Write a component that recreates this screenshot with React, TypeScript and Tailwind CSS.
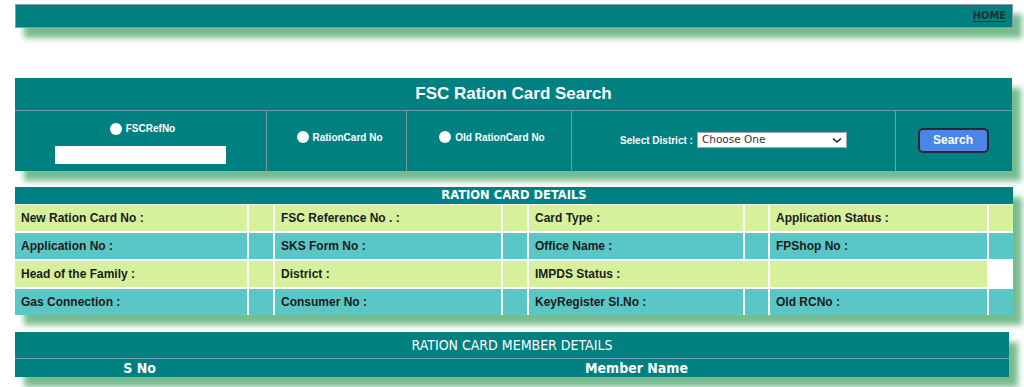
import React from 'react';

const shadow = 'shadow-[9px_10px_6px_#76bc8e]';

const Radio = ({ label }: { label: string }) => (
  <label className="flex items-center gap-[4px] text-[10px] font-bold text-white">
    <span className="inline-block h-[12px] w-[12px] rounded-full bg-white" />
    {label}
  </label>
);

type Cell = { text?: string; bg?: string; span?: string };

const rows: Cell[][] = [
  [
    { text: 'New Ration Card No :' }, {}, { text: 'FSC Reference No . :' }, {},
    { text: 'Card Type :' }, {}, { text: 'Application Status :' }, {},
  ],
  [
    { text: 'Application No :' }, {}, { text: 'SKS Form No :' }, {},
    { text: 'Office Name :' }, {}, { text: 'FPShop No :' }, {},
  ],
  [
    { text: 'Head of the Family :' }, {}, { text: 'District :' }, {},
    { text: 'IMPDS Status :', span: 'col-span-2' }, {}, { bg: 'bg-white' },
  ],
  [
    { text: 'Gas Connection :' }, {}, { text: 'Consumer No :' }, {},
    { text: 'KeyRegister Sl.No :' }, {}, { text: 'Old RCNo :' }, {},
  ],
];

export default function App() {
  return (
    <div className="min-h-[387px] w-[1024px] bg-white pt-[4px] font-['Liberation_Sans',Arial,sans-serif]">
      {/* top bar */}
      <div className={`ml-[15px] flex h-[24px] w-[998px] items-center justify-end border border-[#8b9aa6] bg-[#008080] pr-[6px] ${shadow}`}>
        <a className="text-[11px] font-bold text-[#1e3434] underline underline-offset-2 font-['DejaVu_Sans_Condensed','Liberation_Sans',sans-serif]">HOME</a>
      </div>

      {/* search panel */}
      <div className={`ml-[15px] mt-[50px] w-[997px] bg-[#008080] ${shadow}`}>
        <div className="flex h-[33px] items-center justify-center border-b border-[#6f9c9c] text-[17px] font-bold text-white">
          FSC Ration Card Search
        </div>
        <div className="flex h-[60px]">
          <div className="flex w-[252px] flex-col items-center justify-start border-r border-[#7a9e9e] pl-[4px] pt-[10px]">
            <Radio label="FSCRefNo" />
            <input className="ml-[-4px] mt-[10px] h-[18px] w-[171px] bg-white outline-none" />
          </div>
          <div className="flex w-[140px] items-center justify-center border-r border-[#7a9e9e] pb-[8px] pl-[6px]">
            <Radio label="RationCard No" />
          </div>
          <div className="flex w-[165px] items-center justify-center border-r border-[#7a9e9e] pb-[8px] pl-[6px]">
            <Radio label="Old RationCard No" />
          </div>
          <div className="flex w-[324px] items-center justify-center border-r border-[#7a9e9e] pb-[2px]">
            <span className="mr-[4px] text-[10px] font-bold text-white">Select District :</span>
            <div className="flex h-[16px] w-[150px] items-center justify-between border border-[#9aa] bg-white px-[4px] text-[#333] font-['DejaVu_Sans',sans-serif]">
              <span className="text-[10.5px]">Choose One</span>
              <svg width="10" height="7" viewBox="0 0 10 7">
                <path d="M1 1.5 L5 5 L9 1.5" fill="none" stroke="#222" strokeWidth="1.6" />
              </svg>
            </div>
          </div>
          <div className="flex flex-1 items-center justify-center pb-[2px] pr-[2px]">
            <button className="h-[25px] w-[71px] rounded-[5px] border-2 border-[#2b2b2b] bg-[#4a86e8] text-[12px] font-bold text-white">
              Search
            </button>
          </div>
        </div>
      </div>

      {/* ration card details */}
      <div className={`ml-[15px] mt-[16px] w-[998px] bg-white ${shadow}`}>
        <div className="flex h-[17px] items-center justify-center bg-[#008080] text-[11.5px] font-bold text-white font-['DejaVu_Sans',Verdana,sans-serif]">
          RATION CARD DETAILS
        </div>
        <div className="grid grid-cols-[232px_24px_226px_24px_214px_23px_217px_24px] gap-[2px] pt-[1px]">
          {rows.map((row, ri) =>
            row.map((c, ci) => (
              <div
                key={`${ri}-${ci}`}
                className={`flex h-[26px] items-center pl-[6px] text-[12px] font-bold text-[#1c1c1c] ${c.span ?? ''} ${
                  c.bg ?? (ri % 2 === 0 ? 'bg-[#d6f09c]' : 'bg-[#5bc6c6]')
                }`}
              >
                {c.text}
              </div>
            ))
          )}
        </div>
      </div>

      {/* member details */}
      <div className={`ml-[15px] mt-[17px] w-[994px] bg-[#008080] text-white font-['Liberation_Sans_Narrow','DejaVu_Sans_Condensed',sans-serif] ${shadow}`}>
        <div className="flex h-[27px] items-center justify-center border-b border-[#6fa5a5] text-[14px]">
          RATION CARD MEMBER DETAILS
        </div>
        <div className="flex h-[18px] items-center text-[14px] font-bold">
          <div className="w-[249px] text-center">S No</div>
          <div className="flex-1 text-center">Member Name</div>
        </div>
      </div>
    </div>
  );
}
